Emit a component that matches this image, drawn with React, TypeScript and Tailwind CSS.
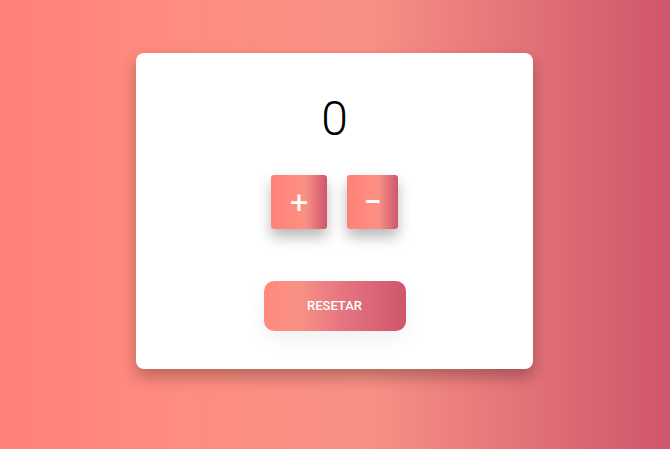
import React, { useState } from "react";

export default function App() {
  const [count, setCount] = useState(0);
  return (
    <div
      className="min-h-screen w-full pt-[53px] bg-[linear-gradient(to_right,#ff8177_0%,#ff8c7f_25%,#f99185_55%,#cf556c_100%)]"
      style={{ fontFamily: "Roboto, 'Liberation Sans', sans-serif" }}
    >
      <div className="ml-[136px] w-[397px] h-[316px] bg-white rounded-[8px] shadow-[0_8px_16px_rgba(0,0,0,0.28)] flex flex-col items-center pt-[38px]">
        <div className="text-[48px] leading-[56px] font-light text-black">{count}</div>
        <div className="mt-[28px] flex gap-[20px]">
          <button
            onClick={() => setCount(count + 1)}
            className="w-[56px] h-[54px] rounded-[3px] flex items-center justify-center text-white text-[32px] leading-none bg-[linear-gradient(to_right,#ff8177_0%,#ff8c7f_45%,#f99185_62%,#cf556c_100%)] shadow-[0_8px_14px_rgba(0,0,0,0.28)]"
          >
            +
          </button>
          <button
            onClick={() => setCount(count - 1)}
            className="w-[51px] h-[54px] rounded-[3px] flex items-center justify-center text-white text-[32px] font-medium leading-none bg-[linear-gradient(to_right,#ff8177_0%,#ff8c7f_45%,#f99185_62%,#cf556c_100%)] shadow-[0_8px_14px_rgba(0,0,0,0.28)]"
          >
            −
          </button>
        </div>
        <button
          onClick={() => setCount(0)}
          className="mt-[52px] w-[142px] h-[50px] rounded-[10px] flex items-center justify-center text-white text-[13px] font-medium bg-[linear-gradient(to_right,#ff8a7d_0%,#f99185_25%,#e57580_55%,#cf556c_100%)] shadow-[0_8px_20px_rgba(0,0,0,0.06)]"
        >
          RESETAR
        </button>
      </div>
    </div>
  );
}
